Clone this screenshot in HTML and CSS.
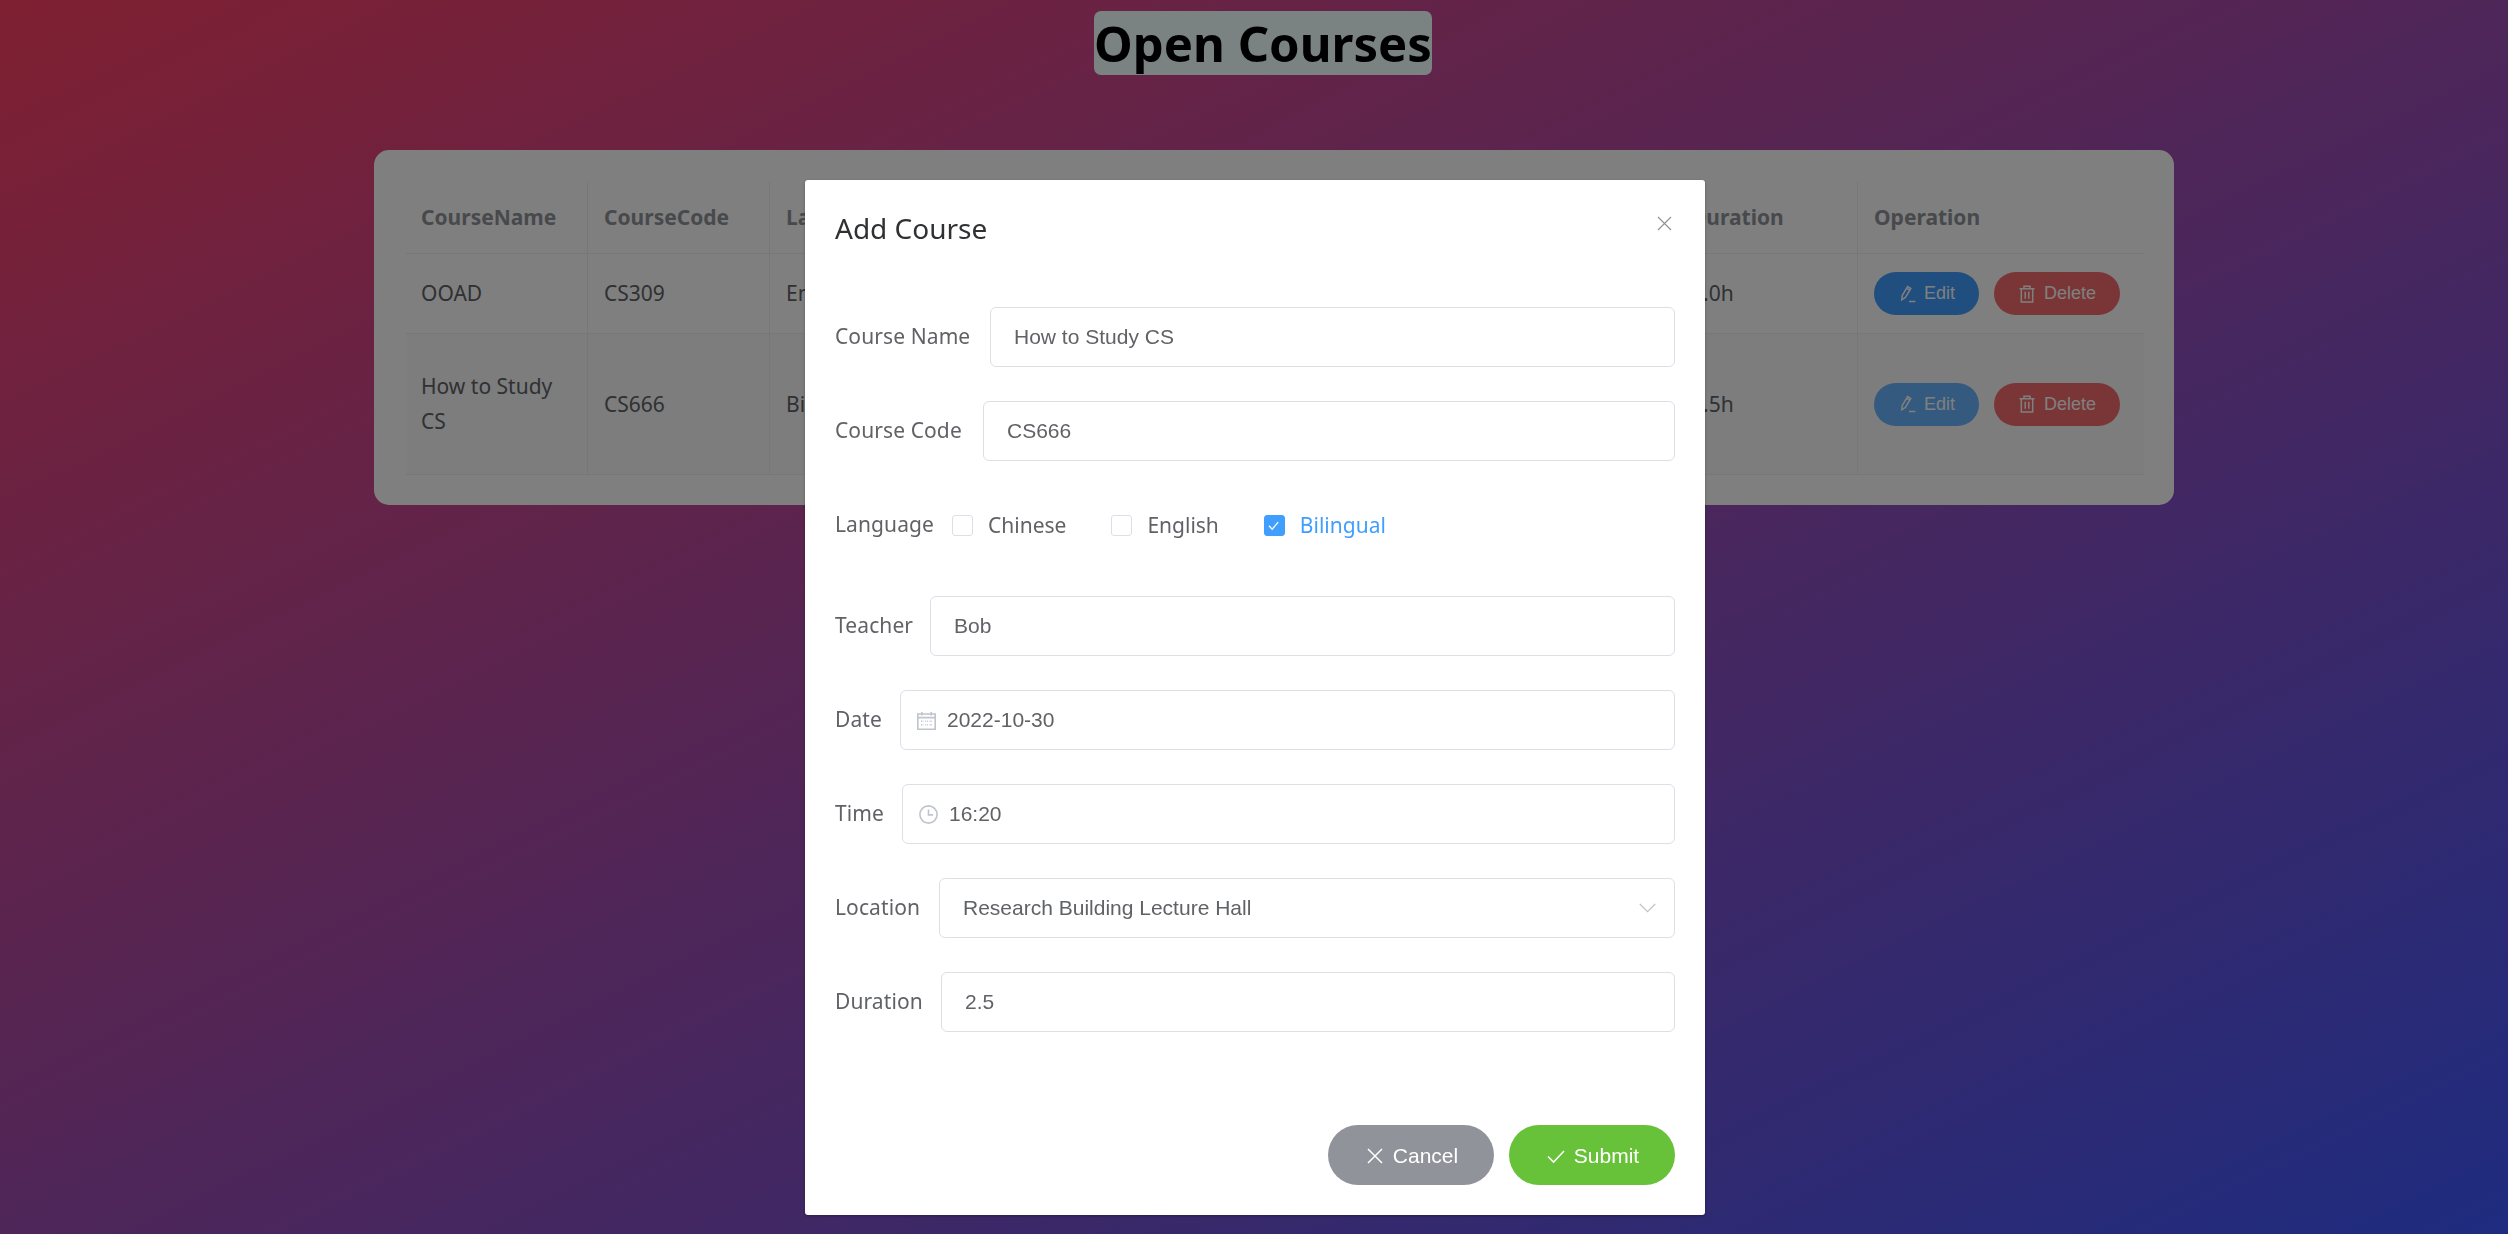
FILE: index.html
```html
<!DOCTYPE html>
<html lang="en">
<head>
<meta charset="utf-8">
<title>Open Courses</title>
<link rel="stylesheet" href="styles.css">
</head>
<body>
<header class="page-head"><h1 class="page-title">Open Courses</h1></header>
<main class="card">
  <table class="courses">
    <colgroup>
      <col class="col-wide"><col class="col-wide"><col class="col"><col class="col"><col class="col"><col class="col"><col class="col"><col class="col-last"><col>
    </colgroup>
    <thead>
      <tr class="row-head">
        <th>CourseName</th><th>CourseCode</th><th>Language</th><th>Teacher</th><th>Date</th><th>Time</th><th>Location</th><th>Duration</th><th>Operation</th>
      </tr>
    </thead>
    <tbody>
      <tr class="row-one">
        <td>OOAD</td><td>CS309</td><td>English</td><td>Alice</td><td>2022-09-12</td><td>10:20</td><td>Teaching Building</td><td>2.0h</td>
        <td>
          <div class="ops">
            <button class="pill pill-edit"><svg class="pill-icon" viewBox="0 0 18 18"><path d="M4.2 10.6 9.6 1.6l3.2 1.9-5.4 9-3.6 2.3zM8.6 3.3l3.2 1.9M11 16.6h6.4"/></svg>Edit</button>
            <button class="pill pill-delete"><svg class="pill-icon" viewBox="0 0 18 18"><path d="M1.5 3.7h15M6 3.7V1.2h6v2.5M3.3 3.7v13.4h11.4V3.7M7.2 6.8v7M10.8 6.8v7"/></svg>Delete</button>
          </div>
        </td>
      </tr>
      <tr class="row-two">
        <td>How to Study CS</td><td>CS666</td><td>Bilingual</td><td>Bob</td><td>2022-10-30</td><td>16:20</td><td>Research Building Lecture Hall</td><td>2.5h</td>
        <td>
          <div class="ops">
            <button class="pill pill-edit-light"><svg class="pill-icon" viewBox="0 0 18 18"><path d="M4.2 10.6 9.6 1.6l3.2 1.9-5.4 9-3.6 2.3zM8.6 3.3l3.2 1.9M11 16.6h6.4"/></svg>Edit</button>
            <button class="pill pill-delete"><svg class="pill-icon" viewBox="0 0 18 18"><path d="M1.5 3.7h15M6 3.7V1.2h6v2.5M3.3 3.7v13.4h11.4V3.7M7.2 6.8v7M10.8 6.8v7"/></svg>Delete</button>
          </div>
        </td>
      </tr>
    </tbody>
  </table>
</main>

<div class="overlay">
  <section class="dialog">
    <header class="dialog-head">
      <h2 class="dialog-title">Add Course</h2>
      <svg class="dialog-close" viewBox="0 0 15 15"><path d="M1 1l13 13M14 1 1 14"/></svg>
    </header>
    <form class="form">
      <div class="form-row">
        <label class="form-label label-name">Course Name</label>
        <div class="field"><input class="field-input" value="How to Study CS" readonly></div>
      </div>
      <div class="form-row">
        <label class="form-label label-code">Course Code</label>
        <div class="field"><input class="field-input" value="CS666" readonly></div>
      </div>
      <div class="form-row form-row-language">
        <label class="form-label label-language">Language</label>
        <div class="checks">
          <span class="check"><span class="check-box"></span>Chinese</span>
          <span class="check"><span class="check-box"></span>English</span>
          <span class="check check-on"><span class="check-box"><svg class="check-mark" viewBox="0 0 21 21"><path d="M6 10.8l3.2 3.4 6-7"/></svg></span>Bilingual</span>
        </div>
      </div>
      <div class="form-row">
        <label class="form-label label-teacher">Teacher</label>
        <div class="field"><input class="field-input" value="Bob" readonly></div>
      </div>
      <div class="form-row">
        <label class="form-label label-date">Date</label>
        <div class="field field-icon">
          <svg class="field-svg" viewBox="0 0 19 19"><path d="M.8 3h17.4v15.2H.8zM.8 6.6h17.4M4.8 1v3.4M14.2 1v3.4"/><path class="dots" d="M4 10.3h2.4M8.3 10.3h2.4M12.6 10.3h2.4M4 13.8h2.4M8.3 13.8h2.4M12.6 13.8h2.4"/></svg>
          <input class="field-input" value="2022-10-30" readonly>
        </div>
      </div>
      <div class="form-row">
        <label class="form-label label-time">Time</label>
        <div class="field field-icon">
          <svg class="field-svg" viewBox="0 0 19 19"><circle cx="9.5" cy="9.5" r="8.6"/><path d="M9.5 4.5v5.4h4.6"/></svg>
          <input class="field-input" value="16:20" readonly>
        </div>
      </div>
      <div class="form-row">
        <label class="form-label label-location">Location</label>
        <div class="field">
          <input class="field-input" value="Research Building Lecture Hall" readonly>
          <svg class="field-chevron" viewBox="0 0 17 10"><path d="M.8 1l7.7 7.7L16.2 1"/></svg>
        </div>
      </div>
      <div class="form-row">
        <label class="form-label label-duration">Duration</label>
        <div class="field"><input class="field-input" value="2.5" readonly></div>
      </div>
      <footer class="dialog-foot">
        <button type="button" class="action action-cancel"><svg class="action-icon" viewBox="0 0 18 18"><path d="M2 2l14 14M16 2 2 16"/></svg>Cancel</button>
        <button type="button" class="action action-submit"><svg class="action-icon" viewBox="0 0 18 18"><path d="M1 9.5l5.6 5.6L17 4"/></svg>Submit</button>
      </footer>
    </form>
  </section>
</div>
</body>
</html>
```
FILE: styles.css
```css
* { box-sizing: border-box; }
html, body { height: 100%; }
body {
  margin: 0;
  min-height: 1234px;
  overflow: hidden;
  background: linear-gradient(to bottom right, #ff4064, #3d58ff);
  font-family: "Noto Sans", "Open Sans", sans-serif;
  color: #606266;
}
.page-head { padding: 11px 0 0 18px; text-align: center; }
.page-title {
  position: relative;
  z-index: 2;
  display: inline-block;
  margin: 0;
  height: 64px;
  border-radius: 7px;
  background: #7a8382;
  color: #000;
  font-size: 49px;
  line-height: 64px;
  font-weight: 700;
}
.card {
  width: 1800px;
  margin: 75px 0 0 374px;
  padding: 32px 30px 30px 32px;
  border-radius: 15px;
  background: #fff;
}
.courses {
  width: 1738px;
  table-layout: fixed;
  border-collapse: separate;
  border-spacing: 0;
  font-size: 21px;
}
.col-wide { width: 182px; }
.col { width: 181px; }
.col-last { width: 183px; }
.courses th, .courses td {
  padding: 0 16px;
  text-align: left;
  vertical-align: middle;
  border-right: 1px solid #ebeef5;
  border-bottom: 1px solid #ebeef5;
  line-height: 35px;
}
.courses th:first-child, .courses td:first-child { padding-left: 15px; }
.courses th:last-child, .courses td:last-child { border-right: 0; }
.courses th { color: #909399; font-weight: 700; }
.row-head { height: 72px; }
.row-one { height: 80px; }
.row-two { height: 141px; }
.row-two td { background: #fafafa; }
.ops { display: flex; gap: 15px; }
.pill {
  display: flex;
  align-items: center;
  gap: 8px;
  height: 43px;
  padding: 0 24px;
  border: 0;
  border-radius: 22px;
  color: #fff;
  font: 18px "Liberation Sans", Arial, sans-serif;
}
.pill-edit { background: #409eff; }
.pill-edit-light { background: #69b4ff; }
.pill-delete { background: #f56c6c; }
.pill-icon {
  width: 18px;
  height: 18px;
  fill: none;
  stroke: #fff;
  stroke-width: 1.5;
}
.overlay {
  position: fixed;
  inset: 0;
  padding: 180px 0 0 805px;
  background: rgba(0, 0, 0, .5);
}
.dialog {
  position: relative;
  width: 900px;
  height: 1035px;
  padding: 0 30px;
  border-radius: 3px;
  background: #fff;
  box-shadow: 0 1px 3px rgba(0, 0, 0, .3);
}
.dialog-head { height: 96px; display: flex; align-items: center; }
.dialog-title {
  margin: 0;
  color: #303133;
  font-size: 28px;
  font-weight: 400;
}
.dialog-close {
  position: absolute;
  top: 36px;
  right: 33px;
  width: 15px;
  height: 15px;
  fill: none;
  stroke: #909399;
  stroke-width: 1.2;
}
.form { padding-top: 31px; }
.form-row {
  display: flex;
  align-items: center;
  height: 60px;
  margin-bottom: 34px;
}
.form-row-language { margin-bottom: 41px; }
.form-label {
  flex: none;
  padding-bottom: 2px;
  font-size: 21px;
  letter-spacing: .1px;
  white-space: nowrap;
}
.label-name { width: 155px; }
.label-code { width: 148px; }
.label-language { width: 117px; }
.label-teacher { width: 95px; }
.label-date { width: 65px; }
.label-time { width: 67px; }
.label-location { width: 104px; }
.label-duration { width: 106px; }
.field {
  flex: 1;
  display: flex;
  align-items: center;
  height: 60px;
  padding: 0 24px 0 23px;
  border: 1.5px solid #dcdfe6;
  border-radius: 6px;
  background: #fff;
}
.field-icon { padding-left: 16px; gap: 11px; }
.field-input {
  flex: 1;
  min-width: 0;
  padding: 0;
  border: 0;
  outline: 0;
  background: none;
  color: #606266;
  font: 21px "Liberation Sans", Arial, sans-serif;
}
.field-svg {
  width: 19px;
  height: 19px;
  fill: none;
  stroke: #c0c4cc;
  stroke-width: 1.6;
}
.field-svg .dots { stroke-width: 1.4; stroke-dasharray: 1 .7; }
.field-chevron {
  width: 17px;
  height: 10px;
  margin-right: -6px;
  fill: none;
  stroke: #c0c4cc;
  stroke-width: 1.3;
}
.checks { display: flex; gap: 45px; padding-bottom: 1px; font-size: 21px; }
.check { display: flex; align-items: center; gap: 15px; }
.check-box {
  display: block;
  width: 21px;
  height: 21px;
  margin-top: 2px;
  border: 1.5px solid #dcdfe6;
  border-radius: 3px;
  background: #fff;
}
.check-on { color: #409eff; }
.check-on .check-box { border-color: #409eff; background: #409eff; }
.check-mark {
  display: block;
  width: 21px;
  height: 21px;
  margin: -1.5px;
  fill: none;
  stroke: #fff;
  stroke-width: 1.3;
}
.dialog-foot {
  display: flex;
  justify-content: flex-end;
  gap: 15px;
  margin-top: 93px;
}
.action {
  display: flex;
  align-items: center;
  justify-content: center;
  gap: 9px;
  width: 166px;
  height: 60px;
  padding: 1px 0 0 2px;
  border: 0;
  border-radius: 30px;
  color: #fff;
  font: 21px "Liberation Sans", Arial, sans-serif;
}
.action-cancel { background: #909399; }
.action-submit { background: #67c23a; }
.action-icon {
  width: 18px;
  height: 18px;
  fill: none;
  stroke: #fff;
  stroke-width: 1.5;
}
```
